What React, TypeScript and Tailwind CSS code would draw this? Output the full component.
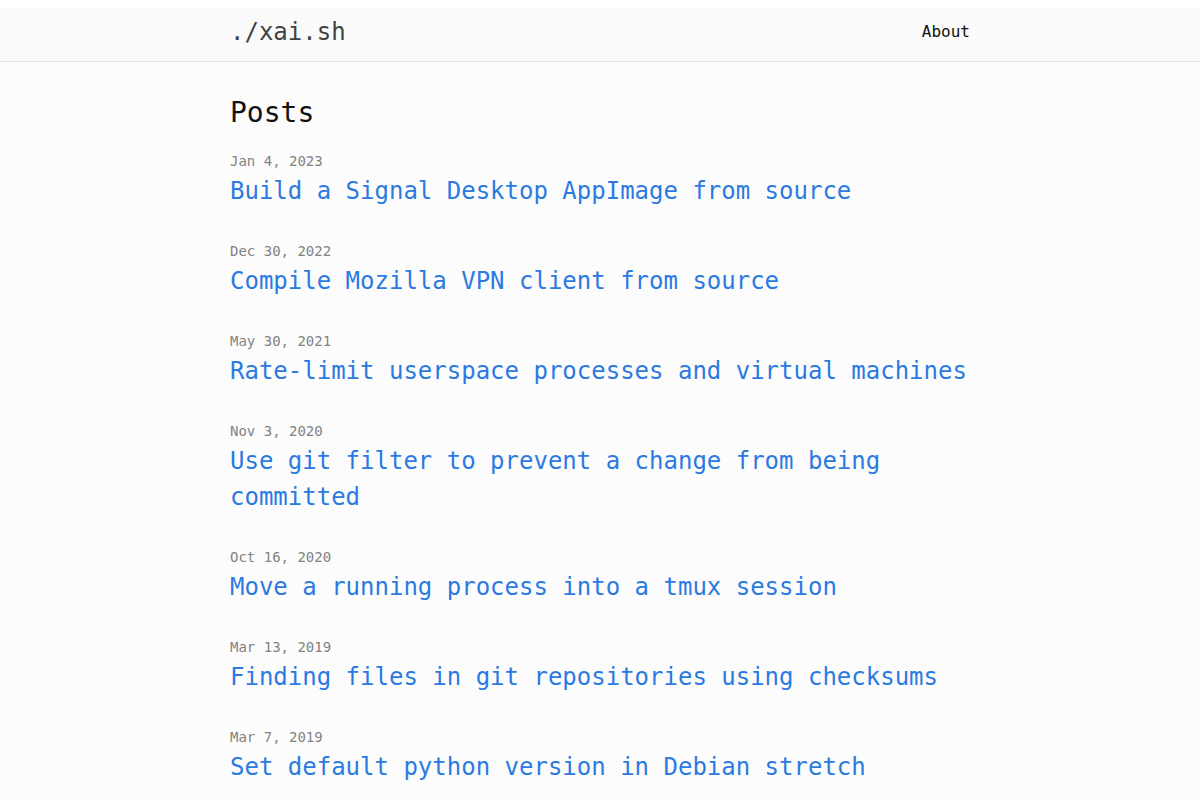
import React from "react";

interface Post {
  date: string;
  title: string;
}

const POSTS: Post[] = [
  { date: "Jan 4, 2023", title: "Build a Signal Desktop AppImage from source" },
  { date: "Dec 30, 2022", title: "Compile Mozilla VPN client from source" },
  { date: "May 30, 2021", title: "Rate-limit userspace processes and virtual machines" },
  { date: "Nov 3, 2020", title: "Use git filter to prevent a change from being committed" },
  { date: "Oct 16, 2020", title: "Move a running process into a tmux session" },
  { date: "Mar 13, 2019", title: "Finding files in git repositories using checksums" },
  { date: "Mar 7, 2019", title: "Set default python version in Debian stretch" },
];

const mono = "font-['DejaVu_Sans_Mono','Liberation_Mono',monospace]";

export default function App() {
  return (
    <div className={`min-h-screen bg-[#fcfcfc] ${mono}`}>
      {/* site header */}
      <header className="border-t-[8px] border-t-white border-b border-b-[#e3e3e3] bg-[#fafafa]">
        <div className="mx-auto flex h-[53px] max-w-[740px] items-center justify-between pb-[5px]">
          <a href="#" className="text-[24px] leading-[36px] text-[#424242]">
            ./xai.sh
          </a>
          <nav>
            <a href="#" className="text-[16px] leading-[24px] text-[#111]">
              About
            </a>
          </nav>
        </div>
      </header>

      <main className="mx-auto max-w-[740px] pt-[30px]">
        <h1 className="mb-[17px] text-[28px] leading-[42px] text-[#111]">Posts</h1>
        <ul>
          {POSTS.map((post) => (
            <li key={post.title} className="mb-[32px]">
              <span className="mb-[2px] block text-[14px] leading-[20px] text-[#828282]">{post.date}</span>
              <a href="#" className="block text-[24px] leading-[36px] text-[#2a7ae2]">
                {post.title}
              </a>
            </li>
          ))}
        </ul>
      </main>
    </div>
  );
}
